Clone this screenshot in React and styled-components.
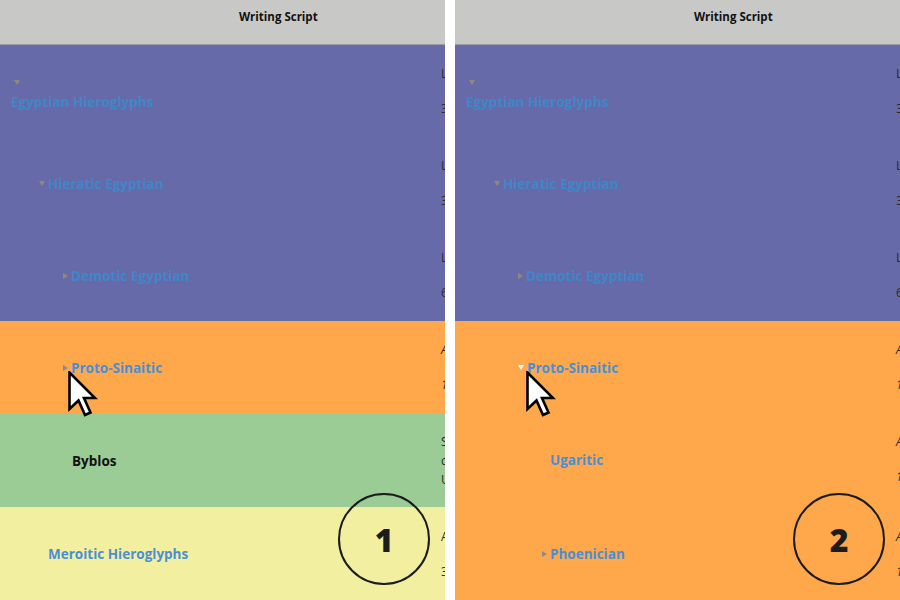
import React from "react";
import styled, { createGlobalStyle } from "styled-components";

const Global = createGlobalStyle`
  html, body { margin: 0; padding: 0; background: #ffffff; }
  body { font-family: "Open Sans", "Liberation Sans", sans-serif; }
`;

const Stage = styled.div`
  display: flex;
  gap: 10px;
  width: 900px;
  height: 600px;
  background: #ffffff;
  overflow: hidden;
`;

const Panel = styled.div`
  position: relative;
  width: 445px;
  height: 600px;
  overflow: hidden;
  display: flex;
  flex-direction: column;
  background: #ffffff;
`;

const Header = styled.div`
  flex: 0 0 auto;
  height: 45px;
  box-sizing: border-box;
  background: #c8c8c6;
  border-bottom: 1px solid #9d9ca6;
  padding: 9px 0 0 239px;
  font-size: 11.5px;
  font-weight: 700;
  color: #111;
  white-space: nowrap;
`;

const Row = styled.div`
  flex: 0 0 auto;
  display: grid;
  grid-template-columns: 440px 240px;
  height: ${(p) => p.$h || 92}px;
  background: ${(p) => p.$bg};
`;

const NameCell = styled.div`
  display: flex;
  flex-direction: ${(p) => (p.$stacked ? "column" : "row")};
  align-items: ${(p) => (p.$stacked ? "flex-start" : "center")};
  justify-content: ${(p) => (p.$stacked ? "center" : "flex-start")};
  gap: ${(p) => (p.$stacked ? "8px" : "0")};
  padding-left: ${(p) => p.$pad}px;
  padding-top: ${(p) => (p.$stacked ? 8 : 1)}px;
  box-sizing: border-box;
`;

const Toggle = styled.span`
  display: inline-block;
  flex: 0 0 auto;
  width: 0;
  height: 0;
  margin-right: ${(p) => (p.$stacked ? 0 : 3)}px;
  margin-left: ${(p) => (p.$stacked ? 3 : 0)}px;
  ${(p) =>
    p.$open
      ? `border-left: 3px solid transparent; border-right: 3px solid transparent; border-top: 5px solid ${p.$color};`
      : `border-top: 3px solid transparent; border-bottom: 3px solid transparent; border-left: 5px solid ${p.$color};`}
`;

const Spacer = styled.span`
  display: inline-block;
  flex: 0 0 auto;
  width: 8px;
`;

const Label = styled.span`
  font-size: 13.5px;
  font-weight: 700;
  color: ${(p) => p.$color};
  white-space: nowrap;
`;

const DetailCell = styled.div`
  display: flex;
  flex-direction: column;
  justify-content: center;
  gap: ${(p) => p.$gap || 22}px;
  padding-left: 1px;
  font-size: 12px;
  line-height: 13px;
  color: #2a2a2a;
  font-style: ${(p) => (p.$italic ? "italic" : "normal")};
  white-space: nowrap;
`;

const Badge = styled.div`
  position: absolute;
  left: ${(p) => p.$x}px;
  top: ${(p) => p.$y}px;
  width: 92px;
  height: 92px;
  box-sizing: border-box;
  border: 2.5px solid #1c1c1c;
  border-radius: 50%;
  display: flex;
  align-items: center;
  justify-content: center;
  font-family: "Open Sans", "Liberation Sans", sans-serif;
  font-weight: 800;
  font-size: 32px;
  color: #1c1c1c;
`;

const CursorWrap = styled.div`
  position: absolute;
  left: ${(p) => p.$x}px;
  top: ${(p) => p.$y}px;
  width: 30px;
  height: 48px;
  pointer-events: none;
`;

const Cursor = ({ x, y }) => (
  <CursorWrap $x={x} $y={y}>
    <svg width="30" height="48" viewBox="0 0 30 48">
      <path
        d="M1.5 1.5 L1.5 38 L10.5 29.5 L17 44 L22.5 41.5 L16 27 L27 27 Z"
        fill="#ffffff"
        stroke="#000000"
        strokeWidth="2.6"
        strokeLinejoin="miter"
      />
    </svg>
  </CursorWrap>
);

const PURPLE = "#676aa8";
const ORANGE = "#fea84b";
const GREEN = "#9bcc96";
const YELLOW = "#f2f0a0";
const BLUE = "#4a8fd6";
const BLUE_DIM = "#3f86c8";

const leftRows = [
  { name: "Egyptian Hieroglyphs", stacked: true, pad: 11, toggle: "open", tcolor: "#8d8b78", color: BLUE_DIM, bg: PURPLE, details: ["Logographic", "3200 BCE"] },
  { name: "Hieratic Egyptian", pad: 39, toggle: "open", tcolor: "#8d8b78", color: BLUE_DIM, bg: PURPLE, details: ["Logographic", "3200 BCE"] },
  { name: "Demotic Egyptian", pad: 63, toggle: "closed", tcolor: "#8d8b78", color: BLUE_DIM, bg: PURPLE, details: ["Logographic", "650 BCE"] },
  { name: "Proto-Sinaitic", pad: 63, toggle: "closed", tcolor: "#8a8a8a", color: BLUE, bg: ORANGE, italic: true, details: ["Abjad", "1850 BCE"] },
  { name: "Byblos", pad: 64, color: "#111111", bg: GREEN, h: 94, gap: 6, details: ["Syllabic", "c. 1800 BCE", "Undeciphered"] },
  { name: "Meroitic Hieroglyphs", pad: 48, noToggle: true, color: BLUE, bg: YELLOW, h: 93, details: ["Abugida", "300 BCE"] },
];

const rightRows = [
  { name: "Egyptian Hieroglyphs", stacked: true, pad: 11, toggle: "open", tcolor: "#8d8b78", color: BLUE_DIM, bg: PURPLE, details: ["Logographic", "3200 BCE"] },
  { name: "Hieratic Egyptian", pad: 39, toggle: "open", tcolor: "#8d8b78", color: BLUE_DIM, bg: PURPLE, details: ["Logographic", "3200 BCE"] },
  { name: "Demotic Egyptian", pad: 63, toggle: "closed", tcolor: "#8d8b78", color: BLUE_DIM, bg: PURPLE, details: ["Logographic", "650 BCE"] },
  { name: "Proto-Sinaitic", pad: 63, toggle: "open", tcolor: "#ffffff", color: BLUE, bg: ORANGE, italic: true, details: ["Abjad", "1850 BCE"] },
  { name: "Ugaritic", pad: 95, noToggle: true, color: BLUE, bg: ORANGE, italic: true, details: ["Abjad", "1400 BCE"] },
  { name: "Phoenician", pad: 87, toggle: "closed", tcolor: "#8a8a8a", color: BLUE, bg: ORANGE, italic: true, h: 97, details: ["Abjad", "1050 BCE"] },
];

const TreeRow = ({ r }) => (
  <Row $bg={r.bg} $h={r.h}>
    <NameCell $stacked={r.stacked} $pad={r.pad}>
      {r.toggle ? (
        <Toggle $open={r.toggle === "open"} $color={r.tcolor} $stacked={r.stacked} />
      ) : r.noToggle ? null : (
        <Spacer />
      )}
      <Label $color={r.color}>{r.name}</Label>
    </NameCell>
    <DetailCell $italic={r.italic} $gap={r.gap}>
      {r.details.map((d) => (
        <span key={d}>{d}</span>
      ))}
    </DetailCell>
  </Row>
);

export default function App() {
  return (
    <>
      <Global />
      <Stage>
        <Panel>
          <Header>Writing Script</Header>
          {leftRows.map((r) => (
            <TreeRow key={r.name} r={r} />
          ))}
          <Badge $x={338} $y={493}>1</Badge>
          <Cursor x={68} y={371} />
        </Panel>
        <Panel>
          <Header>Writing Script</Header>
          {rightRows.map((r) => (
            <TreeRow key={r.name} r={r} />
          ))}
          <Badge $x={338} $y={493}>2</Badge>
          <Cursor x={71} y={371} />
        </Panel>
      </Stage>
    </>
  );
}
